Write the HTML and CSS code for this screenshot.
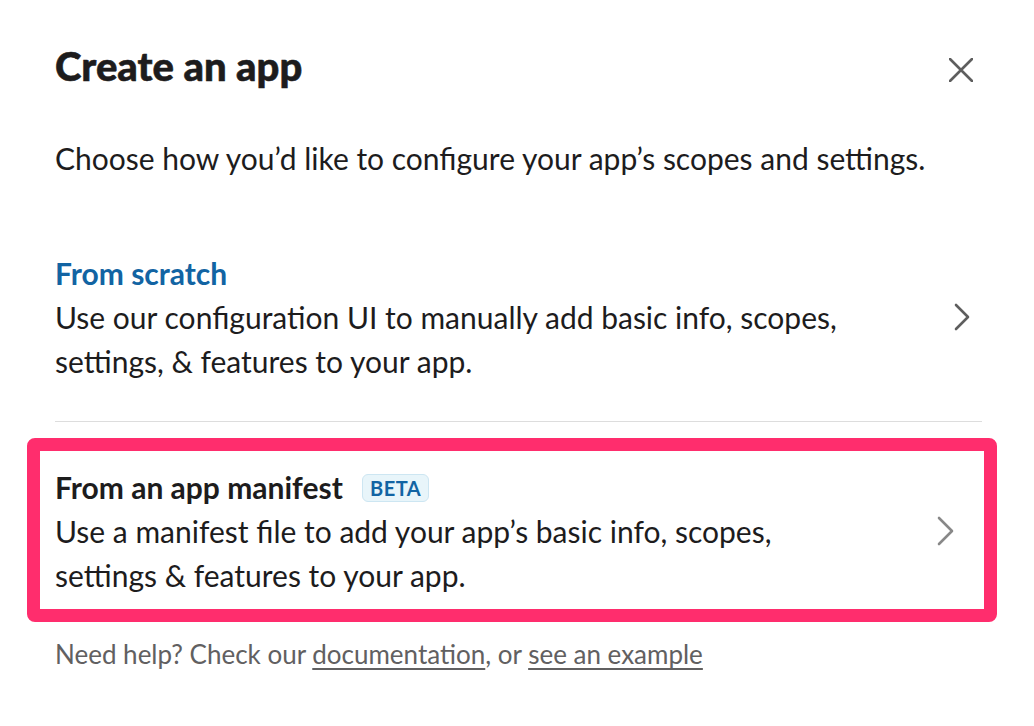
FILE: index.html
```html
<!DOCTYPE html>
<html lang="en">
<head>
  <meta charset="UTF-8">
  <meta name="viewport" content="width=device-width, initial-scale=1.0">
  <title>Create an app</title>
  <link rel="stylesheet" href="styles.css">
</head>
<body>
  <div class="modal">
    <!-- Header -->
    <div class="modal-header">
      <h1>Create an app</h1>
      <button class="close" type="button" aria-label="Close">
        <svg width="24" height="24" viewBox="0 0 24 24"><path d="M1 1 L23 23 M23 1 L1 23" stroke="#5e5e5e" stroke-width="2.6" stroke-linecap="round" fill="none"/></svg>
      </button>
    </div>

    <p class="intro">Choose how you’d like to configure your app’s scopes and settings.</p>

    <!-- From scratch -->
    <div class="option">
      <div class="option-text">
        <div class="option-title blue">From scratch</div>
        <div class="option-desc">Use our configuration UI to manually add basic info, scopes, settings, &amp; features to your app.</div>
      </div>
      <svg class="chevron" width="16" height="28" viewBox="0 0 16 28"><path d="M2 2 L14 14 L2 26" stroke="#5e5e5e" stroke-width="2.6" stroke-linecap="round" stroke-linejoin="round" fill="none"/></svg>
    </div>

    <hr class="divider">

    <!-- From manifest -->
    <div class="highlight">
      <div class="option">
        <div class="option-text">
          <div class="option-title">From an app manifest <span class="badge">BETA</span></div>
          <div class="option-desc">Use a manifest file to add your app’s basic info, scopes, settings &amp; features to your app.</div>
        </div>
        <svg class="chevron light" width="18" height="30" viewBox="0 0 18 30"><path d="M2 2 L15 15 L2 28" stroke="#888888" stroke-width="2.6" stroke-linecap="round" stroke-linejoin="round" fill="none"/></svg>
      </div>
    </div>

    <p class="help">Need help? Check our <a href="#">documentation</a>, or <a href="#">see an example</a></p>
  </div>
</body>
</html>
```

FILE: styles.css
```css
body {
  margin: 0;
  background: #ffffff;
  font-family: Lato, "Open Sans", sans-serif;
  color: #1d1c1d;
}
.modal {
  padding: 40px 52px 0 55px;
}
.modal-header {
  display: flex;
  justify-content: space-between;
  align-items: center;
  height: 52px;
}
h1 {
  margin: 0;
  font-size: 40px;
  line-height: 52px;
  font-weight: 900;
  letter-spacing: 0;
  -webkit-text-stroke: 0.6px #1d1c1d;
}
.close {
  background: none;
  border: none;
  padding: 0;
  margin-right: 9px;
  margin-top: 8px;
  width: 24px;
  height: 24px;
  cursor: pointer;
}
.close svg {
  display: block;
}
.intro {
  margin: 44px 0 0;
  font-size: 30px;
  line-height: 44px;
}
.option {
  display: flex;
  align-items: center;
  justify-content: space-between;
}
.modal > .option {
  margin-top: 71px;
}
.option-text {
  max-width: 800px;
}
.option-title {
  font-size: 30px;
  line-height: 44px;
  font-weight: 700;
}
.option-title.blue {
  color: #1264a3;
}
.option-desc {
  font-size: 30px;
  line-height: 44px;
}
.chevron {
  flex: none;
  margin-right: 12px;
}
.chevron.light {
  margin-right: 29px;
}
.divider {
  border: none;
  border-top: 1px solid #dddddd;
  margin: 38px 0 0;
}
.highlight {
  margin: 16px -15px 0 -28px;
  border: 13px solid #ff2d6d;
  border-radius: 8px;
  padding: 14px 0 12px 15px;
  background: #ffffff;
}
.badge {
  display: inline-block;
  vertical-align: 3px;
  margin-left: 12px;
  padding: 0 7px;
  height: 26px;
  line-height: 26px;
  font-size: 20px;
  font-weight: 700;
  color: #1264a3;
  background: #e8f5fa;
  border: 1px solid #cde6f2;
  border-radius: 6px;
  letter-spacing: 0.5px;
  -webkit-text-stroke: 0;
}
.help {
  margin: 14px 0 0;
  font-size: 26px;
  line-height: 36px;
  color: #616061;
}
.help a {
  color: #616061;
  text-decoration: underline;
  text-underline-offset: 4px;
}
```
